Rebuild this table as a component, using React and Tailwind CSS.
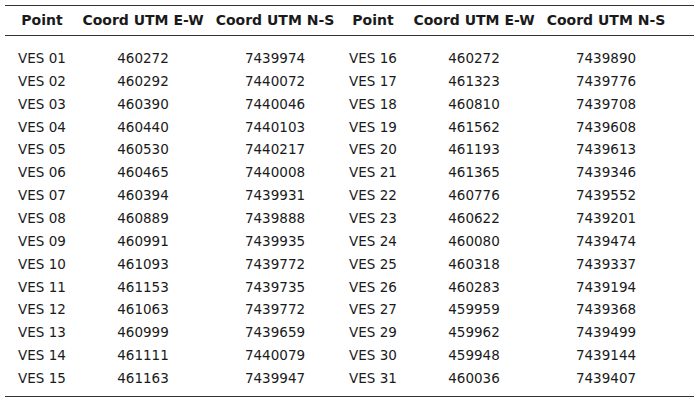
import React from 'react';

const left = [
    ['VES 01', '460272', '7439974'],
    ['VES 02', '460292', '7440072'],
    ['VES 03', '460390', '7440046'],
    ['VES 04', '460440', '7440103'],
    ['VES 05', '460530', '7440217'],
    ['VES 06', '460465', '7440008'],
    ['VES 07', '460394', '7439931'],
    ['VES 08', '460889', '7439888'],
    ['VES 09', '460991', '7439935'],
    ['VES 10', '461093', '7439772'],
    ['VES 11', '461153', '7439735'],
    ['VES 12', '461063', '7439772'],
    ['VES 13', '460999', '7439659'],
    ['VES 14', '461111', '7440079'],
    ['VES 15', '461163', '7439947'],
];

const right = [
    ['VES 16', '460272', '7439890'],
    ['VES 17', '461323', '7439776'],
    ['VES 18', '460810', '7439708'],
    ['VES 19', '461562', '7439608'],
    ['VES 20', '461193', '7439613'],
    ['VES 21', '461365', '7439346'],
    ['VES 22', '460776', '7439552'],
    ['VES 23', '460622', '7439201'],
    ['VES 24', '460080', '7439474'],
    ['VES 25', '460318', '7439337'],
    ['VES 26', '460283', '7439194'],
    ['VES 27', '459959', '7439368'],
    ['VES 29', '459962', '7439499'],
    ['VES 30', '459948', '7439144'],
    ['VES 31', '460036', '7439407'],
];

const cols = 'grid grid-cols-[74px_128px_136px_60px_142px_122px_1fr] text-center';

const App = () => {
    return (
        <div className="w-[699px] h-[401px] bg-white pt-[5px] px-[5px] text-[#1a1a1a] text-[13.5px]" style={{ fontFamily: '"DejaVu Sans", Verdana, sans-serif' }}>
            <div className="border-t border-b border-[#333] h-[31px] font-bold text-[14px]">
                <div className={`${cols} leading-[28px]`}>
                    <div>Point</div>
                    <div>Coord UTM E-W</div>
                    <div>Coord UTM N-S</div>
                    <div>Point</div>
                    <div>Coord UTM E-W</div>
                    <div>Coord UTM N-S</div>
                    <div />
                </div>
            </div>
            <div className="pt-[11px] pb-[6px] border-b border-[#333]">
                {left.map((row, i) => (
                    <div key={row[0]} className={`${cols} h-[22.86px] leading-[23px]`}>
                        <div>{row[0]}</div>
                        <div>{row[1]}</div>
                        <div>{row[2]}</div>
                        <div>{right[i][0]}</div>
                        <div>{right[i][1]}</div>
                        <div>{right[i][2]}</div>
                        <div />
                    </div>
                ))}
            </div>
        </div>
    );
};

export default App;
